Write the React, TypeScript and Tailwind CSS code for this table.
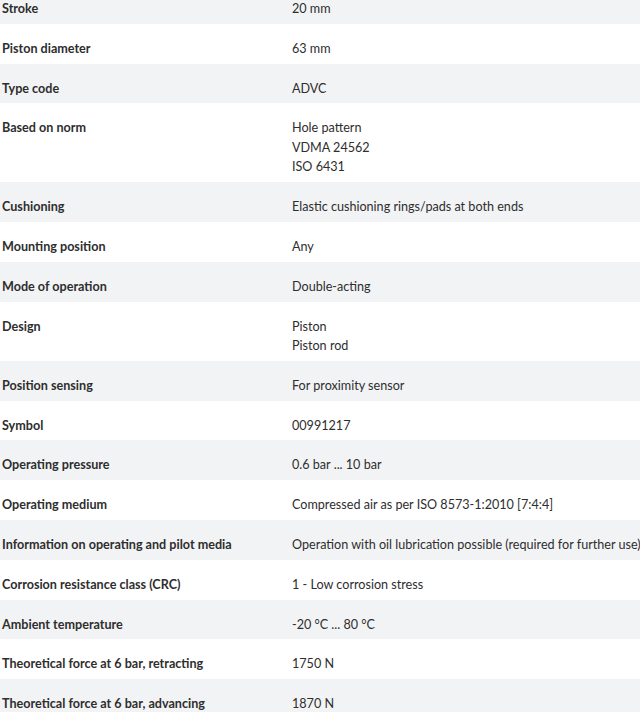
const rows: [string, string[]][] = [
  ['Stroke', ['20 mm']],
  ['Piston diameter', ['63 mm']],
  ['Type code', ['ADVC']],
  ['Based on norm', ['Hole pattern', 'VDMA 24562', 'ISO 6431']],
  ['Cushioning', ['Elastic cushioning rings/pads at both ends']],
  ['Mounting position', ['Any']],
  ['Mode of operation', ['Double-acting']],
  ['Design', ['Piston', 'Piston rod']],
  ['Position sensing', ['For proximity sensor']],
  ['Symbol', ['00991217']],
  ['Operating pressure', ['0.6 bar ... 10 bar']],
  ['Operating medium', ['Compressed air as per ISO 8573-1:2010 [7:4:4]']],
  ['Information on operating and pilot media', ['Operation with oil lubrication possible (required for further use)']],
  ['Corrosion resistance class (CRC)', ['1 - Low corrosion stress']],
  ['Ambient temperature', ['-20 °C ... 80 °C']],
  ['Theoretical force at 6 bar, retracting', ['1750 N']],
  ['Theoretical force at 6 bar, advancing', ['1870 N']],
];

export default function App() {
  return (
    <div className="w-[640px] h-[712px] overflow-hidden bg-white font-['Lato',sans-serif] text-[12.6px] leading-[19.5px] text-[#2e2e2e]">
      <div className="-mt-4">
        {rows.map(([label, values], i) => (
          <div
            key={label}
            className={`grid grid-cols-[290px_1fr] pt-[15px] pb-[5.3px] ${i % 2 === 0 ? 'bg-[#f2f3f5]' : 'bg-white'}`}
          >
            <div className="pl-[2px] font-bold whitespace-nowrap">{label}</div>
            <div className="pl-[2px] whitespace-nowrap">
              {values.map(v => (
                <div key={v}>{v}</div>
              ))}
            </div>
          </div>
        ))}
      </div>
    </div>
  );
}
